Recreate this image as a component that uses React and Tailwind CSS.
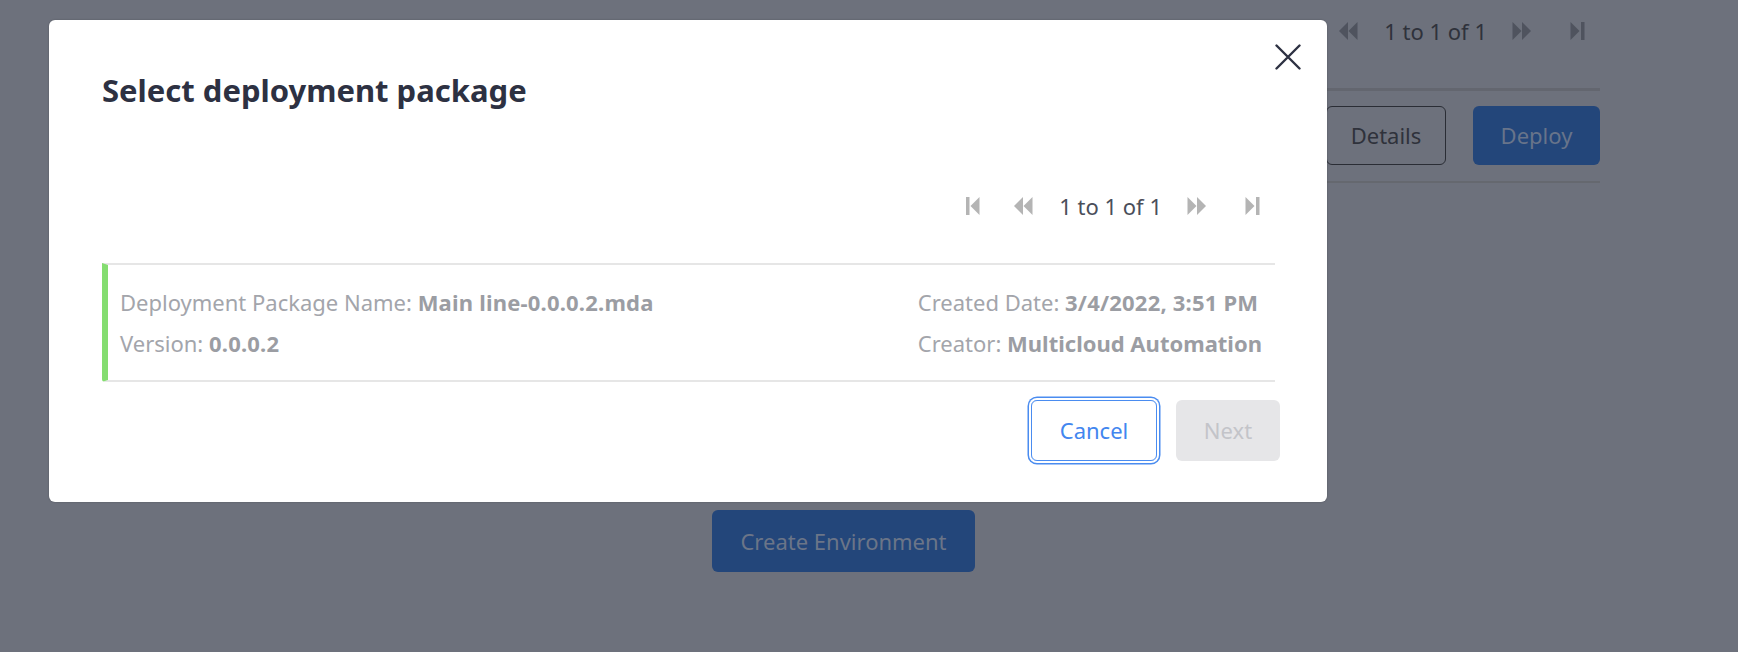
import React from "react";

const FirstIcon = ({ color }) => (
  <svg width="14" height="18" viewBox="0 0 14 18">
    <rect x="0" y="0" width="3.5" height="18" fill={color} />
    <polygon points="13.5,0 4.5,9 13.5,18" fill={color} />
  </svg>
);

const PrevIcon = ({ color }) => (
  <svg width="20" height="18" viewBox="0 0 20 18">
    <polygon points="10,0 1,9 10,18" fill={color} />
    <polygon points="19.5,0 10.5,9 19.5,18" fill={color} />
  </svg>
);

const NextIcon = ({ color }) => (
  <svg width="20" height="18" viewBox="0 0 20 18">
    <polygon points="0.5,0 9.5,9 0.5,18" fill={color} />
    <polygon points="10,0 19,9 10,18" fill={color} />
  </svg>
);

const LastIcon = ({ color }) => (
  <svg width="15" height="18" viewBox="0 0 15 18">
    <polygon points="0.5,0 9.5,9 0.5,18" fill={color} />
    <rect x="11" y="0" width="3.5" height="18" fill={color} />
  </svg>
);

const Pager = ({ iconColor, textColor }) => (
  <div className="flex h-[24px] items-center">
    <FirstIcon color={iconColor} />
    <div className="ml-[33px]">
      <PrevIcon color={iconColor} />
    </div>
    <span className={`ml-[26px] text-[22px] leading-[24px] ${textColor}`}>1 to 1 of 1</span>
    <div className="ml-[25px]">
      <NextIcon color={iconColor} />
    </div>
    <div className="ml-[38px]">
      <LastIcon color={iconColor} />
    </div>
  </div>
);

const App = () => {
  return (
    <div className="relative h-[652px] w-full overflow-hidden bg-[#6d717c] font-['Noto_Sans',sans-serif]">
      {/* page behind the dialog */}
      <div className="flex justify-end pr-[138px]">
        <div className="w-[440px]">
          <div className="flex justify-end pr-[15px] pt-[19px]">
            <Pager iconColor="#4f535e" textColor="text-[#2f323b]" />
          </div>
          <div className="mt-[45px] h-[3px] bg-[#63666f]" />
          <div className="mt-[15px] flex justify-end gap-[27px]">
            <button className="h-[59px] w-[120px] rounded-[6px] border-[1.5px] border-[#2a2d35] text-[22px] text-[#2f323b]">
              Details
            </button>
            <button className="h-[59px] w-[127px] rounded-[6px] bg-[#23467a] text-[22px] text-[#68748a]">
              Deploy
            </button>
          </div>
          <div className="mt-[16px] h-[2px] bg-[#65686f]" />
        </div>
      </div>
      <div className="ml-[712px] mt-[327px]">
        <button className="h-[62px] w-[263px] rounded-[6px] bg-[#23467a] text-[22px] text-[#6b7588]">
          Create Environment
        </button>
      </div>

      {/* dialog */}
      <div className="absolute left-[49px] top-[20px] w-[1278px] rounded-[6px] bg-white pb-[41px] pl-[53px] pr-[47px] pt-[51px] shadow-[0_0_2px_rgba(0,0,0,0.25)]">
        <button className="absolute right-[26px] top-[24px] h-[26px] w-[26px]">
          <svg width="26" height="26" viewBox="0 0 26 26">
            <path d="M1.5 1.5 L24.5 24.5 M24.5 1.5 L1.5 24.5" stroke="#2d3142" strokeWidth="2.4" strokeLinecap="round" />
          </svg>
        </button>
        <h2 className="text-[31px] font-bold leading-[38px] text-[#2d3142]">Select deployment package</h2>

        <div className="mt-[85px] flex justify-end pr-[20px]">
          <Pager iconColor="#b4b4b4" textColor="text-[#4a4e5a]" />
        </div>

        <div className="mr-[5px] mt-[45px] flex justify-between rounded-bl-[3px] border-y-2 border-l-[6px] border-y-[#e6e6e6] border-l-[#84dd70] pb-[16px] pl-[12px] pr-[13px] pt-[17px] text-[22px] leading-[41px] text-[#a3a5ab]">
          <div>
            <div>
              Deployment Package Name: <span className="font-bold tracking-[0.2px] text-[#9b9da3]">Main line-0.0.0.2.mda</span>
            </div>
            <div>
              Version: <span className="font-bold tracking-[0.2px] text-[#9b9da3]">0.0.0.2</span>
            </div>
          </div>
          <div>
            <div>
              Created Date: <span className="font-bold tracking-[0.2px] text-[#9b9da3]">3/4/2022, 3:51 PM</span>
            </div>
            <div>
              Creator: <span className="font-bold text-[#9b9da3]">Multicloud Automation</span>
            </div>
          </div>
        </div>

        <div className="mt-[18px] flex justify-end gap-[19px]">
          <button className="h-[61px] w-[126px] rounded-[6px] border-[1.5px] border-[#4a8cf0] text-[22px] text-[#4286ef] shadow-[0_0_0_2px_#fff,0_0_0_3.5px_#4a8cf0]">
            Cancel
          </button>
          <button className="h-[61px] w-[104px] rounded-[6px] bg-[#e6e6e8] text-[22px] text-[#c3c4c9]">
            Next
          </button>
        </div>
      </div>
    </div>
  );
};

export default App;
